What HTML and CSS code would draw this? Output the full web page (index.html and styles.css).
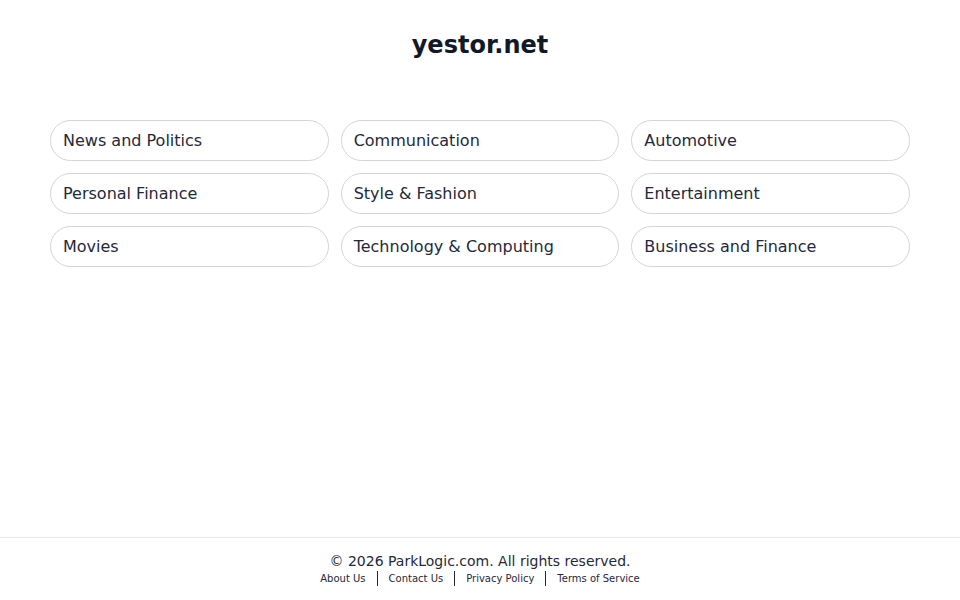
FILE: index.html
```html
<!DOCTYPE html>
<html lang="en">
<head>
  <meta charset="UTF-8">
  <meta name="viewport" content="width=device-width, initial-scale=1.0">
  <title>yestor.net</title>
  <link rel="stylesheet" href="styles.css">
</head>
<body>
  <main class="page">
    <h1 class="title">yestor.net</h1>

    <!-- related searches -->
    <div class="links">
      <a class="pill" href="#">News and Politics</a>
      <a class="pill" href="#">Communication</a>
      <a class="pill" href="#">Automotive</a>
      <a class="pill" href="#">Personal Finance</a>
      <a class="pill" href="#">Style &amp; Fashion</a>
      <a class="pill" href="#">Entertainment</a>
      <a class="pill" href="#">Movies</a>
      <a class="pill" href="#">Technology &amp; Computing</a>
      <a class="pill" href="#">Business and Finance</a>
    </div>
  </main>

  <footer class="footer">
    <p class="copy">&copy; 2026 ParkLogic.com. All rights reserved.</p>
    <nav class="footer-nav">
      <a href="#">About Us</a>
      <span class="sep"></span>
      <a href="#">Contact Us</a>
      <span class="sep"></span>
      <a href="#">Privacy Policy</a>
      <span class="sep"></span>
      <a href="#">Terms of Service</a>
    </nav>
  </footer>
</body>
</html>
```

FILE: styles.css
```css
* {
  margin: 0;
  padding: 0;
  box-sizing: border-box;
}

body {
  font-family: "DejaVu Sans", sans-serif;
  color: #1f2937;
  background: #fff;
  min-height: 100vh;
  display: flex;
  flex-direction: column;
}

.page {
  flex: 1;
  padding: 0 50px;
}

.title {
  text-align: center;
  font-size: 24px;
  font-weight: bold;
  line-height: 28px;
  color: #111827;
  padding-top: 31px;
  margin-bottom: 61px;
}

.links {
  display: grid;
  grid-template-columns: repeat(3, 1fr);
  gap: 12px;
}

.pill {
  display: block;
  height: 41px;
  line-height: 39px;
  padding: 0 12px;
  border: 1px solid #d1d5db;
  border-radius: 21px;
  font-size: 16px;
  color: #1f2937;
  text-decoration: none;
  white-space: nowrap;
}

.footer {
  border-top: 1px solid #e5e7eb;
  padding: 13px 0 14px;
  text-align: center;
}

.copy {
  font-size: 14px;
  line-height: 20px;
  color: #1f2937;
}

.footer-nav {
  display: flex;
  justify-content: center;
  align-items: center;
  font-size: 10px;
  line-height: 15px;
}

.footer-nav a {
  color: #1f2937;
  text-decoration: none;
}

.sep {
  width: 1px;
  height: 15px;
  background: #1f2937;
  margin: 0 11px;
}
```
